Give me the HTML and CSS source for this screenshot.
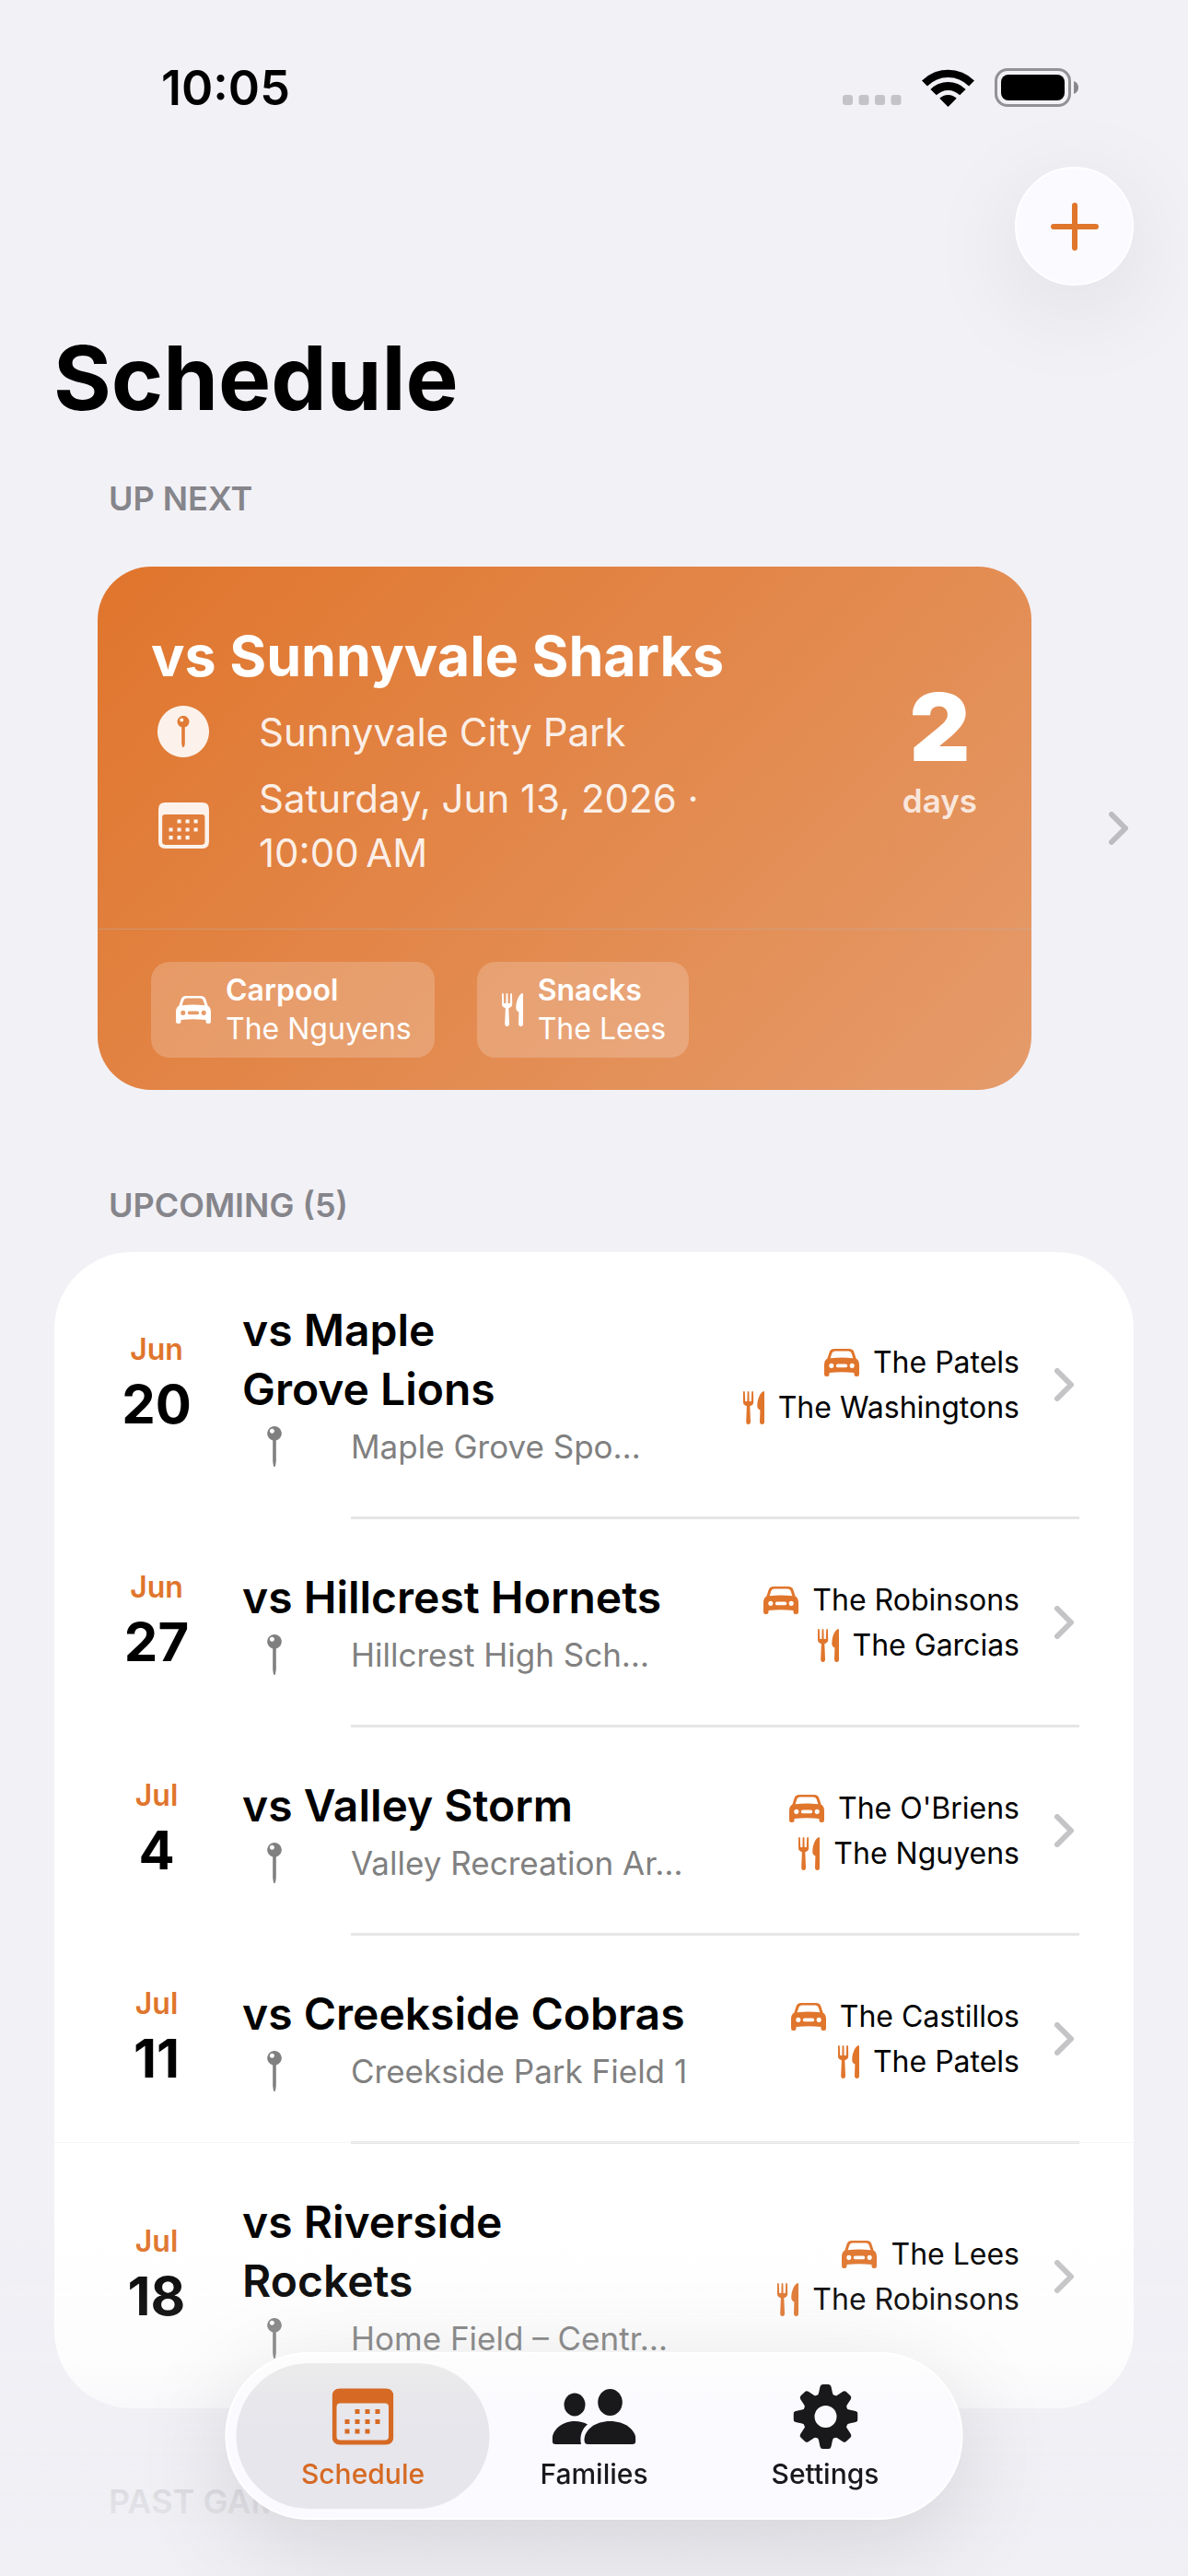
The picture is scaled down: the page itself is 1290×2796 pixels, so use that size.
FILE: index.html
```html
<!DOCTYPE html>
<html lang="en">
<head>
    <meta charset="UTF-8">
    <meta name="viewport" content="width=device-width, initial-scale=1">
    <title>Schedule</title>
    <link rel="stylesheet" href="styles.css">
</head>
<body>
<svg class="sprite" aria-hidden="true">
    <symbol id="car" viewBox="0 0 38 30">
        <path fill-rule="evenodd" d="M11 0H27C30 0 31.5 1 32.5 4L34.6 10.5C37 12 38 14 38 17.5V27.5Q38 30 35.7 30H35Q32.5 30 32.5 27.5V26C24 25 14 25 5.5 26V27.5Q5.5 30 3 30H2.3Q0 30 0 27.5V17.5C0 14 1 12 3.4 10.5L5.5 4C6.5 1 8 0 11 0ZM11.5 2.4Q9 2.4 8.3 5L6.6 10.2C15 9.4 23 9.4 31.4 10.2L29.7 5Q29 2.4 26.5 2.4ZM7.8 15.8a2.6 2.6 0 1 0 .01 0ZM30.2 15.8a2.6 2.6 0 1 0 .01 0ZM14.6 16.6a1.8 1.8 0 0 0 0 3.6H23.4a1.8 1.8 0 0 0 0-3.6Z"/>
    </symbol>
    <symbol id="fork" viewBox="0 0 23 36">
        <path d="M0 1.2Q0 0 .9 0T1.8 1.2L2.2 11H4.4L4.6 1.2Q4.7 0 5.5 0T6.4 1.2L6.6 11H8.8L9.2 1.2Q9.2 0 10.1 0T11 1.2L11.2 12Q11.2 15 7.3 16.2L8 33Q8 36 5.6 36T3.2 33L3.9 16.2Q0 15 0 12Z"/>
        <path d="M23 1Q23 0 22 0C18 2 15.3 9 15.3 16Q15.3 19 18.4 20.5L18 33.3Q18.2 36 20.6 36T23 33.3Z"/>
    </symbol>
    <symbol id="pin" viewBox="0 0 16 44">
        <path fill-rule="evenodd" d="M8 0A7.8 7.8 0 0 1 9.8 15.4V38Q9.4 42 8.6 44H7.4Q6.6 42 6.2 38V15.4A7.8 7.8 0 0 1 8 0ZM5.4 2.8a2.5 2.5 0 1 0 .01 0Z"/>
    </symbol>
    <symbol id="pin-circle" viewBox="0 0 56 56">
        <path fill-rule="evenodd" d="M28 0a28 28 0 1 0 .01 0ZM28 11A6.2 6.2 0 0 1 29.8 23.2V41Q29.4 44 28.6 45H27.4Q26.6 44 26.2 41V23.2A6.2 6.2 0 0 1 28 11Z"/>
        <circle cx="26.3" cy="15.6" r="2"/>
    </symbol>
    <symbol id="calendar" viewBox="0 0 67 61">
        <path fill-rule="evenodd" d="M9 0H58Q67 0 67 9V52Q67 61 58 61H9Q0 61 0 52V9Q0 0 9 0ZM9 16Q5 16 5 20V52Q5 56 9 56H57.5Q61.5 56 61.5 52V20Q61.5 16 57.5 16Z"/>
        <path d="M25 22.5h5v5h-5zM36 22.5h5v5h-5zM47 22.5h5v5h-5zM14 33.5h5v5h-5zM25 33.5h5v5h-5zM36 33.5h5v5h-5zM47 33.5h5v5h-5zM14 44h5v5h-5zM25 44h5v5h-5zM36 44h5v5h-5z"/>
    </symbol>
    <symbol id="people" viewBox="0 0 91 60">
        <ellipse cx="24.5" cy="17" rx="11.5" ry="12.5"/>
        <ellipse cx="63" cy="14.5" rx="13.3" ry="14.5"/>
        <path d="M35 55.5C35 44 47 35 63 35S91 44 91 55.5Q91 60 87 60H39Q35 60 35 55.5Z"/>
        <path d="M0 55.5C0 45 10 35 24.5 35C30 35 35 36.5 38.5 38.5C33 43 29.5 50 31.5 60H4Q0 60 0 55.5Z"/>
    </symbol>
    <symbol id="gear" viewBox="0 0 70 70">
        <circle cx="35" cy="35" r="18.5" fill="none" stroke="currentColor" stroke-width="13"/>
        <g id="teeth">
            <path id="tooth" d="M25 13Q27 12 27.5 9.5L29 2.5Q29.5 0 32 0H38Q40.5 0 41 2.5L42.500 9.500Q43 12 45 13Z"/>
            <use href="#tooth" transform="rotate(45 35 35)"/>
            <use href="#tooth" transform="rotate(90 35 35)"/>
            <use href="#tooth" transform="rotate(135 35 35)"/>
        </g>
        <use href="#teeth" transform="rotate(180 35 35)"/>
    </symbol>
    <symbol id="chevron" viewBox="0 0 21 36">
        <path d="M3 3L18 18L3 33" fill="none" stroke="currentColor" stroke-width="6" stroke-linecap="round" stroke-linejoin="round"/>
    </symbol>
</svg>

<header class="status-bar">
    <span class="time">10:05</span>
    <div class="status-icons">
        <svg class="dots" width="64" height="11" viewBox="0 0 64 11" aria-hidden="true">
            <rect width="11" height="11" rx="3"/>
            <rect x="17.5" width="11" height="11" rx="3"/>
            <rect x="35" width="11" height="11" rx="3"/>
            <rect x="52.5" width="11" height="11" rx="3"/>
        </svg>
        <svg width="57" height="41" viewBox="0 0 57 41" aria-hidden="true">
            <path d="M0 12.4A40.5 40.5 0 0 1 57 12.4L51.1 18.4A32 32 0 0 0 5.9 18.4Z"/>
            <path d="M9.4 21.9A27 27 0 0 1 47.6 21.9L41.2 28.3A18 18 0 0 0 15.8 28.3Z"/>
            <path d="M19.3 31.8A13 13 0 0 1 37.7 31.8L28.5 41Z"/>
        </svg>
        <svg width="91" height="42" viewBox="0 0 91 42" aria-hidden="true">
            <rect x="1.5" y="1.5" width="80" height="39" rx="12.5" fill="none" stroke="#929294" stroke-width="3"/>
            <rect x="7" y="7" width="69" height="28" rx="8"/>
            <path d="M86 14Q91 16 91 21T86 28Z" fill="#88888a"/>
        </svg>
    </div>
</header>

<main class="screen">
    <div class="toolbar">
        <button class="add" type="button" aria-label="Add game">
            <svg width="52" height="52" viewBox="0 0 52 52" aria-hidden="true">
                <path d="M26 3V49M3 26H49" stroke="currentColor" stroke-width="6" stroke-linecap="round"/>
            </svg>
        </button>
    </div>
    <h1>Schedule</h1>

    <h2>UP NEXT</h2>
    <a class="next-game" href="#">
        <div class="card">
            <div class="card-main">
                <div class="card-info">
                    <h3>vs Sunnyvale Sharks</h3>
                    <div class="card-line">
                        <svg class="icon" width="56" height="56"><use href="#pin-circle"/></svg>
                        <span>Sunnyvale City Park</span>
                    </div>
                    <div class="card-line">
                        <svg class="icon" width="55" height="50"><use href="#calendar"/></svg>
                        <span>Saturday, Jun 13, 2026 ·<br>10:00&#8239;AM</span>
                    </div>
                </div>
                <div class="countdown">
                    <span class="count">2</span>
                    <span class="unit">days</span>
                </div>
            </div>
            <div class="card-duties">
                <div class="chip">
                    <svg class="icon" width="38" height="30"><use href="#car"/></svg>
                    <div><strong>Carpool</strong><br>The Nguyens</div>
                </div>
                <div class="chip">
                    <svg class="icon" width="23" height="36"><use href="#fork"/></svg>
                    <div><strong>Snacks</strong><br>The Lees</div>
                </div>
            </div>
        </div>
        <svg class="chevron" width="21" height="36"><use href="#chevron"/></svg>
    </a>

    <h2>UPCOMING (5)</h2>
    <ul class="games">
        <li>
            <a class="game" href="#">
                <div class="date"><span class="month">Jun</span><span class="day">20</span></div>
                <div class="info">
                    <h3>vs Maple<br>Grove Lions</h3>
                    <p class="place"><svg class="icon" width="16" height="44"><use href="#pin"/></svg>Maple Grove Spo…</p>
                </div>
                <div class="duties">
                    <span class="duty"><svg class="icon" width="38" height="30"><use href="#car"/></svg>The Patels</span>
                    <span class="duty"><svg class="icon" width="23" height="36"><use href="#fork"/></svg>The Washingtons</span>
                </div>
                <svg class="chevron" width="21" height="36"><use href="#chevron"/></svg>
            </a>
        </li>
        <li>
            <a class="game" href="#">
                <div class="date"><span class="month">Jun</span><span class="day">27</span></div>
                <div class="info">
                    <h3>vs Hillcrest Hornets</h3>
                    <p class="place"><svg class="icon" width="16" height="44"><use href="#pin"/></svg>Hillcrest High Sch…</p>
                </div>
                <div class="duties">
                    <span class="duty"><svg class="icon" width="38" height="30"><use href="#car"/></svg>The Robinsons</span>
                    <span class="duty"><svg class="icon" width="23" height="36"><use href="#fork"/></svg>The Garcias</span>
                </div>
                <svg class="chevron" width="21" height="36"><use href="#chevron"/></svg>
            </a>
        </li>
        <li>
            <a class="game" href="#">
                <div class="date"><span class="month">Jul</span><span class="day">4</span></div>
                <div class="info">
                    <h3>vs Valley Storm</h3>
                    <p class="place"><svg class="icon" width="16" height="44"><use href="#pin"/></svg>Valley Recreation Ar…</p>
                </div>
                <div class="duties">
                    <span class="duty"><svg class="icon" width="38" height="30"><use href="#car"/></svg>The O'Briens</span>
                    <span class="duty"><svg class="icon" width="23" height="36"><use href="#fork"/></svg>The Nguyens</span>
                </div>
                <svg class="chevron" width="21" height="36"><use href="#chevron"/></svg>
            </a>
        </li>
        <li>
            <a class="game" href="#">
                <div class="date"><span class="month">Jul</span><span class="day">11</span></div>
                <div class="info">
                    <h3>vs Creekside Cobras</h3>
                    <p class="place"><svg class="icon" width="16" height="44"><use href="#pin"/></svg>Creekside Park Field 1</p>
                </div>
                <div class="duties">
                    <span class="duty"><svg class="icon" width="38" height="30"><use href="#car"/></svg>The Castillos</span>
                    <span class="duty"><svg class="icon" width="23" height="36"><use href="#fork"/></svg>The Patels</span>
                </div>
                <svg class="chevron" width="21" height="36"><use href="#chevron"/></svg>
            </a>
        </li>
        <li>
            <a class="game" href="#">
                <div class="date"><span class="month">Jul</span><span class="day">18</span></div>
                <div class="info">
                    <h3>vs Riverside<br>Rockets</h3>
                    <p class="place"><svg class="icon" width="16" height="44"><use href="#pin"/></svg>Home Field – Centr…</p>
                </div>
                <div class="duties">
                    <span class="duty"><svg class="icon" width="38" height="30"><use href="#car"/></svg>The Lees</span>
                    <span class="duty"><svg class="icon" width="23" height="36"><use href="#fork"/></svg>The Robinsons</span>
                </div>
                <svg class="chevron" width="21" height="36"><use href="#chevron"/></svg>
            </a>
        </li>
    </ul>

    <h2>PAST GAMES</h2>
</main>

<div class="fade"></div>
<nav class="tab-bar">
    <a class="tab active" href="#" aria-current="page">
        <svg class="icon" width="67" height="61"><use href="#calendar"/></svg>
        Schedule
    </a>
    <a class="tab" href="#">
        <svg class="icon" width="91" height="60"><use href="#people"/></svg>
        Families
    </a>
    <a class="tab" href="#">
        <svg class="icon" width="70" height="70"><use href="#gear"/></svg>
        Settings
    </a>
</nav>
</body>
</html>
```
FILE: styles.css
```css
* {
    box-sizing: border-box;
}
body {
    margin: 0;
    height: 100vh;
    overflow: hidden;
    background: #f2f1f6;
    color: #000;
    font-family: Inter, "Liberation Sans", sans-serif;
}
a {
    color: inherit;
    text-decoration: none;
}
h1, h2, h3, p, ul {
    margin: 0;
    padding: 0;
}
.sprite {
    display: none;
}
.icon {
    fill: currentColor;
    flex: none;
}
.chevron {
    flex: none;
    color: #c4c4c6;
}

/* status bar */
.status-bar {
    display: flex;
    justify-content: space-between;
    align-items: center;
    height: 181px;
    padding: 8px 119px 0 175px;
}
.time {
    padding-top: 2px;
    font-size: 52px;
    font-weight: 600;
}
.status-icons {
    display: flex;
    align-items: flex-end;
    gap: 22px;
}
.dots {
    margin-bottom: 2px;
    fill: #c3c3c8;
}

/* header */
.toolbar {
    display: flex;
    justify-content: flex-end;
    padding-right: 59px;
}
.add {
    display: flex;
    align-items: center;
    justify-content: center;
    width: 129px;
    height: 129px;
    padding: 0;
    border: 2px solid #fff;
    border-radius: 50%;
    background: #fafaff;
    color: #e0752c;
    box-shadow: 0 24px 110px rgba(0, 0, 0, 0.09);
}
h1 {
    padding: 40px 58px 0;
    font-size: 96px;
    line-height: 120px;
    font-weight: 700;
}
h2 {
    padding: 0 118px;
    color: #85858b;
    font-size: 36px;
    line-height: 48px;
    font-weight: 600;
}

/* next game */
h1 + h2 {
    margin-top: 47px;
}
.next-game {
    display: flex;
    align-items: center;
    gap: 84px;
    padding: 0 65px 0 106px;
    margin: 50px 0 101px;
}
.next-game .chevron {
    color: #bcbcc1;
}
.card {
    flex: 1;
    border-radius: 58px;
    background: linear-gradient(135deg, #e0752c, #e59b6b);
    color: #fff;
}
.card-main {
    display: flex;
    align-items: center;
    justify-content: space-between;
    padding: 58px 59px 53px 58px;
    border-bottom: 1px solid rgba(180, 180, 180, 0.4);
}
.card h3 {
    font-size: 61px;
    line-height: 78px;
    font-weight: 700;
}
.card-line {
    display: grid;
    grid-template-columns: 70px 1fr;
    column-gap: 47px;
    align-items: center;
    min-height: 86px;
    color: rgba(255, 255, 255, 0.9);
    font-size: 42px;
    line-height: 59px;
}
.card-line .icon {
    justify-self: center;
}
.countdown {
    display: flex;
    flex-direction: column;
    align-items: center;
    padding-top: 4px;
}
.count {
    font-size: 102px;
    line-height: 106px;
    font-weight: 900;
}
.unit {
    color: rgba(255, 255, 255, 0.8);
    font-size: 35px;
    line-height: 54px;
    font-weight: 600;
}
.card-duties {
    display: flex;
    gap: 46px;
    padding: 35px 58px;
}
.chip {
    display: flex;
    align-items: center;
    gap: 16px;
    padding: 10px 25px 10px 27px;
    border-radius: 20px;
    background: rgba(255, 255, 255, 0.2);
    font-size: 32px;
    line-height: 42px;
}
.chip strong {
    font-weight: 600;
}

/* upcoming games */
.games {
    margin: 27px 59px 77px;
    border-radius: 84px;
    background: #fff;
    list-style: none;
}
.games li + li::before {
    content: "";
    display: block;
    height: 3px;
    margin: 0 59px 0 322px;
    background: #e6e6e6;
}
.game {
    display: flex;
    align-items: center;
    padding: 53px 65px 52px 61px;
}
.date {
    display: flex;
    flex-direction: column;
    align-items: center;
    width: 100px;
    margin-right: 43px;
}
.month {
    color: #e0752c;
    font-size: 32px;
    line-height: 42px;
    font-weight: 600;
}
.day {
    font-size: 58px;
    line-height: 76px;
    font-weight: 700;
}
.info {
    flex: 1;
    white-space: nowrap;
}
.game h3 {
    font-size: 48px;
    line-height: 64px;
    font-weight: 600;
}
.place {
    display: flex;
    align-items: center;
    gap: 75px;
    height: 49px;
    margin-top: 5px;
    padding-left: 27px;
    color: #808080;
    font-size: 35px;
}
.duties {
    display: flex;
    flex-direction: column;
    align-items: flex-end;
    margin-right: 38px;
}
.duty {
    display: flex;
    align-items: center;
    gap: 15px;
    font-size: 32px;
    line-height: 49px;
    white-space: nowrap;
}
.duty .icon {
    color: #e0752c;
}

/* tab bar */
.fade {
    position: fixed;
    left: 0;
    right: 0;
    bottom: 0;
    height: 471px;
    border-top: 1px solid rgba(242, 241, 246, 0.8);
    background: linear-gradient(rgba(239, 239, 244, 0) 16%, rgba(239, 239, 244, 0.15) 50%, rgba(239, 239, 244, 0.5) 65%, rgba(239, 239, 244, 0.85) 82%, #efeff4) padding-box;
    pointer-events: none;
}
.tab-bar {
    position: fixed;
    left: 50%;
    bottom: 61px;
    display: flex;
    padding: 10px;
    border: 2px solid #fff;
    border-radius: 91px;
    background: linear-gradient(#fdfdfd, #fafaff 40%);
    box-shadow: 0 24px 110px rgba(0, 0, 0, 0.12);
    transform: translateX(-50%);
}
.tab {
    display: flex;
    flex-direction: column;
    align-items: center;
    justify-content: flex-end;
    width: 275px;
    height: 158px;
    padding-bottom: 20px;
    border-radius: 79px;
    color: #19191c;
    font-size: 30px;
    line-height: 36px;
    font-weight: 500;
}
.tab + .tab {
    margin-left: -24px;
}
.tab .icon {
    height: 70px;
    margin-bottom: 9px;
}
.tab.active {
    background: linear-gradient(#ebebeb, #e6e6ec 40%);
    color: #d66a24;
}
```
